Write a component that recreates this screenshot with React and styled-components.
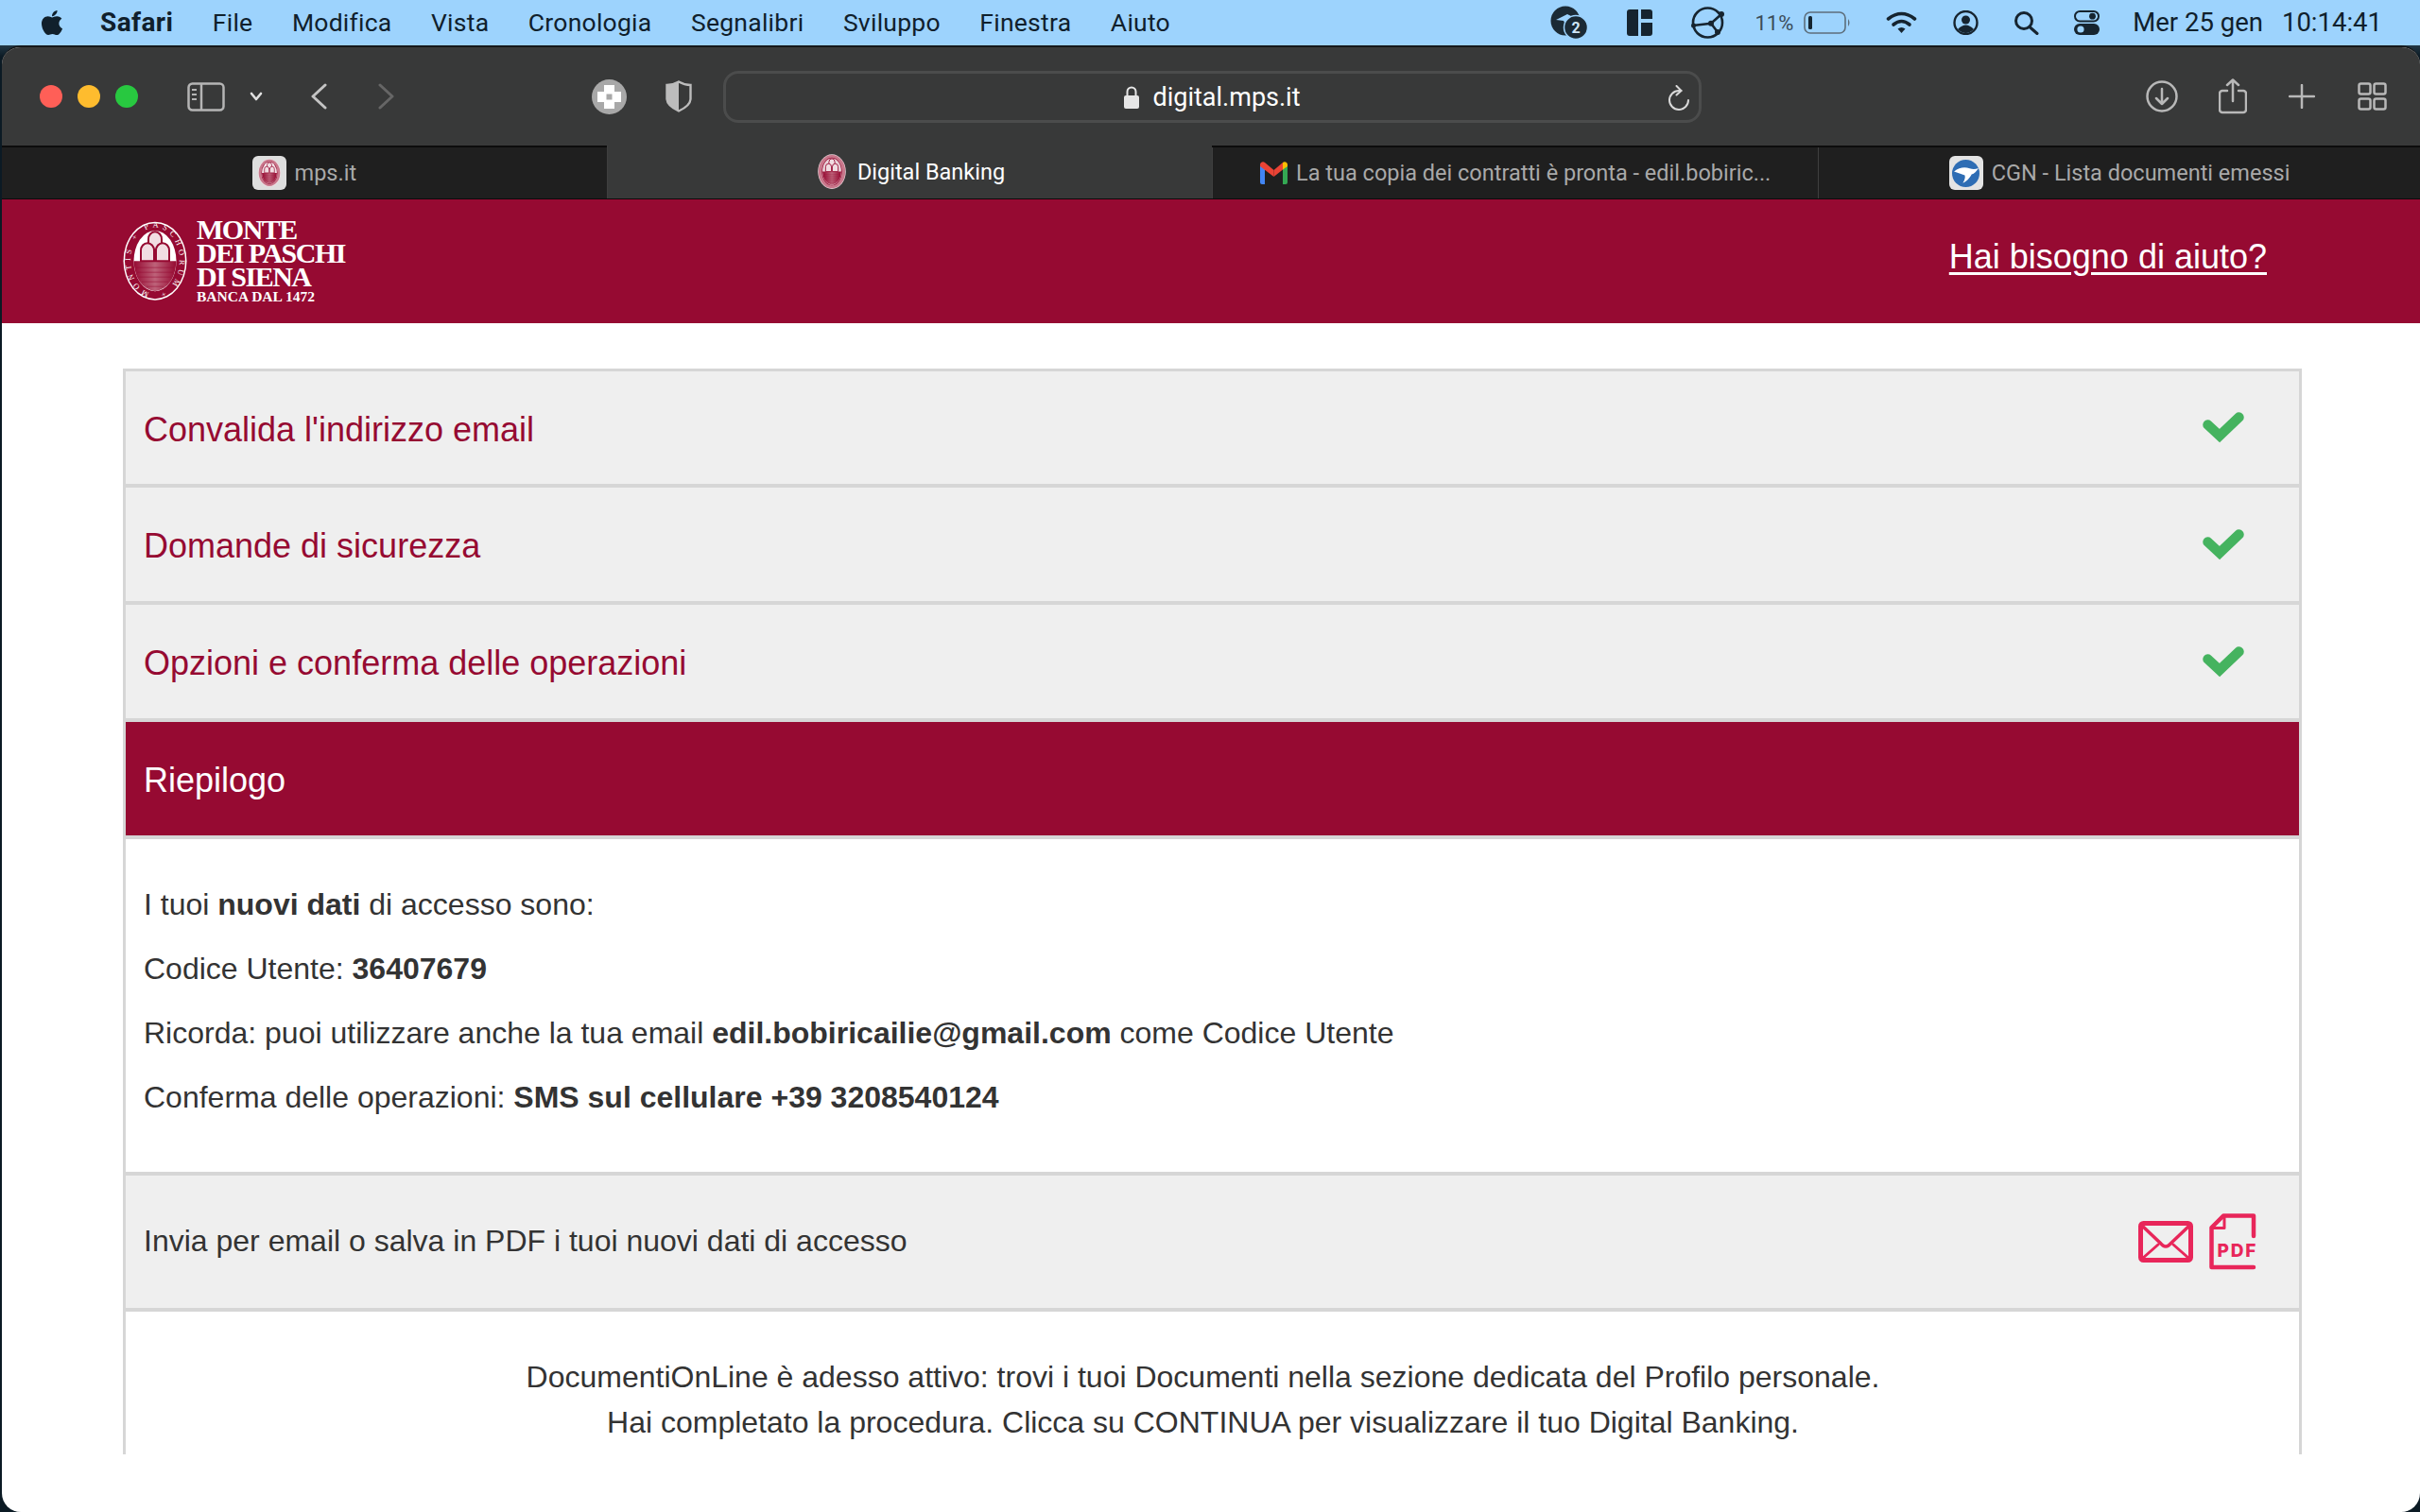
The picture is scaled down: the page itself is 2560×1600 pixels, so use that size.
import React from 'react';
import styled, { createGlobalStyle } from 'styled-components';
import { FaApple } from 'react-icons/fa';

const CRIMSON = '#960a32';
const LINE = '#d6d6d6';
const SAND = '#efefef';
const UI_FONT = 'Roboto, "Liberation Sans", sans-serif';

const GlobalStyle = createGlobalStyle`
  html, body {
    margin: 0;
    padding: 0;
    background: #0b1a24;
  }
  * { box-sizing: border-box; }
`;

const Screen = styled.div`
  width: 2560px;
  height: 1600px;
  overflow: hidden;
  display: flex;
  flex-direction: column;
  background: linear-gradient(180deg, #7fa9c4 0, #0b1a24 60px);
  font-family: "Liberation Sans", Arial, sans-serif;
`;

const MenuBar = styled.div`
  height: 48px;
  flex: none;
  display: flex;
  align-items: center;
  padding: 0 40px;
  background: #9dd3fd;
  color: #10202c;
  font-family: ${UI_FONT};
  font-size: 26.5px;
`;

const MenuItems = styled.div`
  display: flex;
  align-items: center;
  gap: 41.5px;
  margin-left: 36px;
  padding-bottom: 2px;
`;

const MenuItem = styled.span`
  font-weight: ${(p) => (p.$bold ? 700 : 400)};
  font-size: ${(p) => (p.$bold ? '28px' : 'inherit')};
  letter-spacing: ${(p) => (p.$bold ? '0.4px' : '0.25px')};
`;

const StatusArea = styled.div`
  margin-left: auto;
  display: flex;
  align-items: center;
  height: 48px;
`;

const StatusSlot = styled.div`
  display: flex;
  align-items: center;
  margin-left: ${(p) => p.$gap}px;
`;

const BatteryText = styled.span`
  font-size: 22px;
  color: #3a4b58;
`;

const Clock = styled.div`
  display: flex;
  gap: 20px;
  margin-left: 35px;
  padding-bottom: 2px;
  font-size: 27.5px;
`;

const Window = styled.div`
  flex: 1;
  margin-left: 2px;
  display: flex;
  flex-direction: column;
  background: #fff;
  border-radius: 20px;
  overflow: hidden;
  border-top: 2px solid #15181a;
`;

const Toolbar = styled.div`
  height: 104px;
  flex: none;
  display: flex;
  align-items: center;
  background: #383939;
  color: #d0d0d0;
  font-family: ${UI_FONT};
`;

const Light = styled.span`
  width: 24px;
  height: 24px;
  border-radius: 50%;
  margin-right: 16px;
  background: ${(p) => p.$color};
  &:first-child { margin-left: 40px; }
`;

const ToolIcon = styled.div`
  display: flex;
  align-items: center;
  flex: none;
  margin-left: ${(p) => p.$gap}px;
`;

const AddressBar = styled.div`
  position: relative;
  width: 1035px;
  height: 55px;
  margin-left: 33px;
  flex: none;
  display: flex;
  align-items: center;
  justify-content: center;
  gap: 14px;
  padding-top: 2px;
  border: 3px solid #4b4c4c;
  border-radius: 16px;
  color: #fff;
  font-size: 27px;
`;

const Reload = styled.div`
  position: absolute;
  right: 9px;
  top: 12px;
  display: flex;
`;

const TabStrip = styled.div`
  height: 57px;
  flex: none;
  display: flex;
  background: #1f1f1f;
  border-top: 2px solid #0c0c0c;
  border-bottom: 1px solid #0c0c0c;
  font-family: ${UI_FONT};
  font-size: 23.5px;
`;

const Tab = styled.div`
  flex: 1;
  display: flex;
  align-items: center;
  justify-content: center;
  gap: 9px;
  white-space: nowrap;
  color: ${(p) => (p.$active ? '#ffffff' : '#a9a9a9')};
  background: ${(p) => (p.$active ? '#383939' : '#1f1f1f')};
  margin-top: ${(p) => (p.$active ? '-2px' : '0')};
  border-left: 1px solid #3f3f3f;
  &:first-child { border-left: none; }
  &:last-child { flex: 0 0 637px; }
`;

const FavTile = styled.span`
  width: 36px;
  height: 36px;
  border-radius: 6px;
  background: ${(p) => p.$bg || 'transparent'};
  display: flex;
  align-items: center;
  justify-content: center;
`;

const BankHeader = styled.header`
  height: 131px;
  flex: none;
  display: flex;
  align-items: center;
  justify-content: space-between;
  padding: 0 162px 0 128px;
  background: ${CRIMSON};
`;

const Brand = styled.div`
  display: flex;
  align-items: center;
  gap: 10px;
`;

const BrandWords = styled.div`
  display: flex;
  flex-direction: column;
  margin-top: -2px;
  color: #fff;
  font-family: "Liberation Serif", "Times New Roman", serif;
  font-weight: 700;
`;

const BrandLine = styled.span`
  font-size: 30px;
  line-height: 25px;
  letter-spacing: -1.5px;
`;

const BrandTag = styled.span`
  font-size: 15.5px;
  line-height: 15px;
  margin-top: 1px;
`;

const HelpLink = styled.a`
  color: #fff;
  font-size: 36px;
  text-decoration: underline;
  text-underline-offset: 4px;
  margin-top: -9px;
`;

const Content = styled.main`
  height: 1197px;
  flex: none;
  overflow: hidden;
  padding: 48px 125px 0 128px;
  background: #fff;
`;

const Panel = styled.section`
  border: 3px solid ${LINE};
  border-bottom: none;
  height: 1200px;
`;

const StepRow = styled.div`
  height: 124px;
  display: flex;
  align-items: center;
  justify-content: space-between;
  padding: 4px 58px 0 19px;
  background: ${(p) => (p.$active ? CRIMSON : SAND)};
  color: ${(p) => (p.$active ? '#fff' : CRIMSON)};
  border-bottom: 4px solid ${LINE};
  font-size: 36px;
  &:first-child { height: 123px; }
`;

const CheckSlot = styled.span`
  display: flex;
  margin-top: -4px;
`;

const Summary = styled.div`
  height: 352px;
  padding: 51px 19px 0;
  color: #333;
  font-size: 32px;
`;

const SummaryLine = styled.p`
  margin: 0 0 32px;
  line-height: 36px;
  b { font-weight: 700; }
`;

const ActionRow = styled.div`
  height: 148px;
  display: flex;
  align-items: center;
  justify-content: space-between;
  padding: 0 41px 0 19px;
  background: ${SAND};
  border-top: 4px solid ${LINE};
  border-bottom: 4px solid ${LINE};
  color: #333;
  font-size: 32px;
`;

const ActionText = styled.span`
  margin-top: -2px;
`;

const ActionIcons = styled.div`
  display: flex;
  align-items: center;
  gap: 17px;
`;

const Closing = styled.div`
  padding: 45px 20px 0 0;
  color: #333;
  font-size: 32px;
  line-height: 48px;
  text-align: center;
`;

const Check = () => (
  <svg width="44" height="33" viewBox="0 0 44 33">
    <path d="M5.5 13.5 L18 25 L38.5 5.5" fill="none" stroke="#45b35f" strokeWidth="10.5" strokeLinecap="round" />
  </svg>
);

// the seal; the favicon sizes leave out the lettering, it would not be legible
const Emblem = ({ size = 68, ink = '#fff', deep = CRIMSON, lettered = false }) => (
  <svg width={size} height={size * 1.24} viewBox="0 0 68 84">
    <defs>
      <path id="emblem-ring" d="M34 76.5 a26 35 0 1 1 0 -70 a26 35 0 1 1 0 70" />
      <linearGradient id="emblem-water" x1="0" x2="1" y1="0" y2="0">
        <stop offset="0" stopColor={deep} />
        <stop offset=".5" stopColor="#bd6279" />
        <stop offset="1" stopColor={deep} />
      </linearGradient>
    </defs>
    <ellipse cx="34" cy="42" rx="33.5" ry="41.5" fill={ink} />
    <ellipse cx="34" cy="42" rx="32" ry="40" fill={lettered ? deep : '#c9788c'} />
    {lettered && (
      <text fontSize="8.4" fill={ink} fontFamily="Liberation Serif, serif">
        <textPath href="#emblem-ring" startOffset="6" textLength="180">MONTIS + PASCHORUM +</textPath>
      </text>
    )}
    <ellipse cx="34" cy="42" rx="24" ry="33.5" fill={deep} />
    <ellipse cx="34" cy="42" rx="22.5" ry="32" fill={ink} />
    <path d="M11.5 42 H56.5 Q55 70 34 74 Q13 70 11.5 42 Z" fill="url(#emblem-water)" />
    <path d="M14 49 H54 M15 54 H53 M17 59 H51 M20 64 H48 M25 69 H43" stroke={deep} strokeWidth="1" opacity=".5" />
    <g fill="#f1dde2" stroke={deep} strokeWidth="2">
      <path d="M27 30 V19 a7 8 0 0 1 14 0 V30 Z" />
      <path d="M19 42 V31 a7 8 0 0 1 14 0 V42 Z" />
      <path d="M35 42 V31 a7 8 0 0 1 14 0 V42 Z" />
    </g>
  </svg>
);

const GmailMark = () => (
  <svg width="29" height="24" viewBox="0 0 29 24">
    <path d="M0 3 L5 1 V24 H2 a2 2 0 0 1 -2 -2 Z" fill="#4285f4" />
    <path d="M29 3 L24 1 V24 H27 a2 2 0 0 0 2 -2 Z" fill="#34a853" />
    <path d="M0 3 a3 3 0 0 1 5 -2 L14.5 9 V16 L0 5 Z" fill="#ea4335" />
    <path d="M14.5 9 L24 1 V8.5 L14.5 16 Z" fill="#ea4335" />
    <path d="M24 1 a3 3 0 0 1 5 2 V5 L24 8.5 Z" fill="#fbbc04" />
  </svg>
);

const CgnMark = () => (
  <svg width="29" height="29" viewBox="0 0 28 28">
    <circle cx="14" cy="14" r="14" fill="#2e6db4" />
    <path d="M2 12 Q10 6 18 9 Q23 10.5 27 8.5 Q24 14 20 15 Q17 21 11 24 Q14 19 13 16 Q8 14 2 12 Z" fill="#fff" />
  </svg>
);

const MailGlyph = () => (
  <svg width="58" height="45" viewBox="0 0 58 45" fill="none" stroke="#e8265a" strokeLinecap="round" strokeLinejoin="round">
    <rect x="2.5" y="2.5" width="53" height="39" rx="3" strokeWidth="5" />
    <path d="M4 5 L26 26 Q29 28 32 26 L54 5" strokeWidth="3.5" />
    <path d="M4 40 L21 25 M54 40 L37 25" strokeWidth="3" />
  </svg>
);

const PdfGlyph = () => (
  <svg width="54" height="60" viewBox="0 0 54 60" fill="none" stroke="#e8265a" strokeLinecap="round" strokeLinejoin="round">
    <path d="M47 24 V2.5 H15 L2.5 15 V57 H47" strokeWidth="4.5" />
    <path d="M16 4 V15.5 H4" strokeWidth="3" />
    <text x="8.5" y="46" fontSize="19" fontWeight="800" letterSpacing="1.8" fill="#e8265a" stroke="none" fontFamily="Inter, sans-serif">PDF</text>
  </svg>
);

const SidebarGlyph = () => (
  <svg width="40" height="31" viewBox="0 0 40 31" fill="none" stroke="#b5b5b5" strokeWidth="2.5">
    <rect x="1.5" y="1.5" width="37" height="28" rx="4" />
    <path d="M15 2 V29" />
    <path d="M5 8 H10 M5 13 H10 M5 18 H10" strokeWidth="2" />
  </svg>
);

const Chevron = ({ dir, color = '#c4c4c4', w = 18, h = 28 }) => (
  <svg width={w} height={h} viewBox="0 0 18 28" fill="none" stroke={color} strokeWidth="3" strokeLinecap="round" strokeLinejoin="round">
    <path d={dir === 'left' ? 'M16 2 L3 14 L16 26' : 'M2 2 L15 14 L2 26'} />
  </svg>
);

const SmallCaret = () => (
  <svg width="14" height="10" viewBox="0 0 14 10" fill="none" stroke="#e0e0e0" strokeWidth="2.6" strokeLinecap="round" strokeLinejoin="round">
    <path d="M2 2 L7 8 L12 2" />
  </svg>
);

const ExtensionGlyph = () => (
  <svg width="37" height="37" viewBox="0 0 37 37">
    <circle cx="18.5" cy="18.5" r="18.5" fill="#a8a8a8" />
    <path d="M13 6 H24 V13 H31 V24 H24 V31 H13 V24 H6 V13 H13 Z" fill="#fff" />
    <rect x="15.5" y="15.5" width="6" height="6" fill="#a8a8a8" />
  </svg>
);

const ShieldGlyph = () => (
  <svg width="28" height="34" viewBox="0 0 28 34">
    <path d="M14 1.5 Q20 5 26.5 5 V20 Q26 27 14 32.5 Q2 27 1.5 20 V5 Q8 5 14 1.5 Z" fill="none" stroke="#bcbcbc" strokeWidth="2.4" />
    <path d="M14 1.5 Q8 5 1.5 5 V20 Q2 27 14 32.5 Z" fill="#bcbcbc" />
  </svg>
);

const LockGlyph = () => (
  <svg width="16" height="24" viewBox="0 0 16 24">
    <rect x="0" y="10" width="16" height="14" rx="2" fill="#e6e6e6" />
    <path d="M3.5 11 V6 a4.5 4.5 0 0 1 9 0 V11" fill="none" stroke="#e6e6e6" strokeWidth="2" />
  </svg>
);

const ReloadGlyph = () => (
  <svg width="24" height="27" viewBox="0 0 24 27" fill="none" stroke="#d8d8d8" strokeWidth="2" strokeLinecap="round" strokeLinejoin="round">
    <path d="M14.5 6 H12 A10 10 0 1 0 22 16" />
    <path d="M9.5 1 L14.5 6 L9.5 10.5" />
  </svg>
);

const DownloadGlyph = () => (
  <svg width="34" height="34" viewBox="0 0 34 34" fill="none" stroke="#b8b8b8" strokeWidth="2.5" strokeLinecap="round" strokeLinejoin="round">
    <circle cx="17" cy="17" r="15.5" />
    <path d="M17 9 V25 M11 19 L17 25 L23 19" />
  </svg>
);

const ShareGlyph = () => (
  <svg width="30" height="38" viewBox="0 0 30 38" fill="none" stroke="#b8b8b8" strokeWidth="2.5" strokeLinecap="round" strokeLinejoin="round">
    <path d="M9 13 H4 a3 3 0 0 0 -3 3 V33 a3 3 0 0 0 3 3 H26 a3 3 0 0 0 3 -3 V16 a3 3 0 0 0 -3 -3 H21" />
    <path d="M15 24 V2 M9 7 L15 1.5 L21 7" />
  </svg>
);

const PlusGlyph = () => (
  <svg width="28" height="26" viewBox="0 0 28 26" stroke="#b8b8b8" strokeWidth="2.5" strokeLinecap="round">
    <path d="M14 1 V25 M1 13 H27" />
  </svg>
);

const GridGlyph = () => (
  <svg width="31" height="30" viewBox="0 0 31 30" fill="none" stroke="#b8b8b8" strokeWidth="2.5">
    <rect x="1.5" y="1.5" width="12" height="11" rx="2" />
    <rect x="17.5" y="1.5" width="12" height="11" rx="2" />
    <rect x="1.5" y="17.5" width="12" height="11" rx="2" />
    <rect x="17.5" y="17.5" width="12" height="11" rx="2" />
  </svg>
);

const BackupGlyph = () => (
  <svg width="40" height="36" viewBox="0 0 40 36">
    <circle cx="16" cy="16" r="15.5" fill="#1b2a35" />
    <path d="M6 15 L18 9 L24 12 L15 18 L14 16 Z" fill="#9dd3fd" />
    <circle cx="27" cy="23" r="12.5" fill="#1b2a35" stroke="#9dd3fd" strokeWidth="1.5" />
    <text x="27" y="29" fontSize="16" fontWeight="700" textAnchor="middle" fill="#cfe6f7" fontFamily="Roboto, sans-serif">2</text>
  </svg>
);

const PanesGlyph = () => (
  <svg width="27" height="28" viewBox="0 0 27 28" fill="#16242f">
    <path d="M3 0 H12 V28 H3 a3 3 0 0 1 -3 -3 V3 a3 3 0 0 1 3 -3 Z" />
    <path d="M15 0 H24 a3 3 0 0 1 3 3 V10 H15 Z" />
    <path d="M15 14 H27 V25 a3 3 0 0 1 -3 3 H15 Z" />
  </svg>
);

const MeshGlyph = () => (
  <svg width="36" height="34" viewBox="0 0 36 34" fill="none" stroke="#16242f" strokeWidth="2.6">
    <circle cx="17.5" cy="17" r="15.5" />
    <path d="M2 20 L21 17.7 L32 8 M21 17.7 L28 27" />
    <g fill="#16242f" stroke="none">
      <circle cx="21" cy="17.7" r="3" />
      <circle cx="32" cy="8" r="3" />
      <circle cx="28" cy="27" r="3" />
      <circle cx="2.5" cy="20" r="2.5" />
    </g>
  </svg>
);

const BatteryGlyph = () => (
  <svg width="50" height="24" viewBox="0 0 50 24">
    <rect x="1" y="1" width="43" height="22" rx="6" fill="none" stroke="#5d6e7b" strokeWidth="1.6" />
    <rect x="5" y="5" width="4" height="14" rx="1.5" fill="#16242f" />
    <path d="M47 8 Q50 12 47 16 Z" fill="#5d6e7b" />
  </svg>
);

const WifiGlyph = () => (
  <svg width="33" height="24" viewBox="0 0 33 24" fill="none" stroke="#16242f" strokeWidth="3.6" strokeLinecap="round">
    <path d="M2.5 8 Q16.5 -3 30.5 8" />
    <path d="M8 14 Q16.5 7 25 14" />
    <path d="M16.5 23 L12.5 18.5 Q16.5 15.5 20.5 18.5 Z" fill="#16242f" stroke="none" />
  </svg>
);

const UserGlyph = () => (
  <svg width="27" height="26" viewBox="0 0 27 26">
    <circle cx="13.5" cy="13" r="12" fill="none" stroke="#16242f" strokeWidth="2.4" />
    <circle cx="13.5" cy="10" r="4.5" fill="#16242f" />
    <path d="M5 20 Q13.5 11 22 20 Q13.5 28 5 20 Z" fill="#16242f" />
  </svg>
);

const SearchGlyph = () => (
  <svg width="27" height="25" viewBox="0 0 27 25" fill="none" stroke="#16242f" strokeWidth="3" strokeLinecap="round">
    <circle cx="11" cy="10" r="8.5" />
    <path d="M17 16.5 L25 23.5" />
  </svg>
);

const TogglesGlyph = () => (
  <svg width="27" height="26" viewBox="0 0 27 26">
    <rect x="1" y="1" width="25" height="10.5" rx="5.2" fill="none" stroke="#16242f" strokeWidth="2" />
    <circle cx="19.5" cy="6.2" r="3.4" fill="#16242f" />
    <rect y="14" width="27" height="12" rx="6" fill="#16242f" />
    <circle cx="7" cy="20" r="3.6" fill="#9dd3fd" />
  </svg>
);

const menus = ['File', 'Modifica', 'Vista', 'Cronologia', 'Segnalibri', 'Sviluppo', 'Finestra', 'Aiuto'];

const steps = ["Convalida l'indirizzo email", 'Domande di sicurezza', 'Opzioni e conferma delle operazioni'];

const App = () => (
  <>
    <GlobalStyle />
    <Screen>
      <MenuBar>
        <FaApple size={30} />
        <MenuItems>
          <MenuItem $bold>Safari</MenuItem>
          {menus.map((m) => (
            <MenuItem key={m}>{m}</MenuItem>
          ))}
        </MenuItems>
        <StatusArea>
          <StatusSlot $gap={0}><BackupGlyph /></StatusSlot>
          <StatusSlot $gap={41}><PanesGlyph /></StatusSlot>
          <StatusSlot $gap={41}><MeshGlyph /></StatusSlot>
          <StatusSlot $gap={31}><BatteryText>11%</BatteryText></StatusSlot>
          <StatusSlot $gap={11}><BatteryGlyph /></StatusSlot>
          <StatusSlot $gap={37}><WifiGlyph /></StatusSlot>
          <StatusSlot $gap={38}><UserGlyph /></StatusSlot>
          <StatusSlot $gap={37}><SearchGlyph /></StatusSlot>
          <StatusSlot $gap={37}><TogglesGlyph /></StatusSlot>
          <Clock>
            <span>Mer 25 gen</span>
            <span>10:14:41</span>
          </Clock>
        </StatusArea>
      </MenuBar>
      <Window>
        <Toolbar>
          <Light $color="#ff5f57" />
          <Light $color="#febc2e" />
          <Light $color="#28c840" />
          <ToolIcon $gap={36}><SidebarGlyph /></ToolIcon>
          <ToolIcon $gap={26}><SmallCaret /></ToolIcon>
          <ToolIcon $gap={50}><Chevron dir="left" /></ToolIcon>
          <ToolIcon $gap={54}><Chevron dir="right" color="#666666" /></ToolIcon>
          <ToolIcon $gap={208}><ExtensionGlyph /></ToolIcon>
          <ToolIcon $gap={41}><ShieldGlyph /></ToolIcon>
          <AddressBar>
            <LockGlyph />
            digital.mps.it
            <Reload><ReloadGlyph /></Reload>
          </AddressBar>
          <ToolIcon $gap={470}><DownloadGlyph /></ToolIcon>
          <ToolIcon $gap={43}><ShareGlyph /></ToolIcon>
          <ToolIcon $gap={44}><PlusGlyph /></ToolIcon>
          <ToolIcon $gap={45}><GridGlyph /></ToolIcon>
        </Toolbar>
        <TabStrip>
          <Tab>
            <FavTile $bg="#dedede"><Emblem size={24} ink="#f3e3e7" /></FavTile>
            mps.it
          </Tab>
          <Tab $active>
            <FavTile><Emblem size={30} ink="#e9d3d9" /></FavTile>
            Digital Banking
          </Tab>
          <Tab>
            <GmailMark />
            La tua copia dei contratti è pronta - edil.bobiric...
          </Tab>
          <Tab>
            <FavTile $bg="#e4e4e4"><CgnMark /></FavTile>
            CGN - Lista documenti emessi
          </Tab>
        </TabStrip>
        <BankHeader>
          <Brand>
            <Emblem lettered />
            <BrandWords>
              <BrandLine>MONTE</BrandLine>
              <BrandLine>DEI PASCHI</BrandLine>
              <BrandLine>DI SIENA</BrandLine>
              <BrandTag>BANCA DAL 1472</BrandTag>
            </BrandWords>
          </Brand>
          <HelpLink href="#">Hai bisogno di aiuto?</HelpLink>
        </BankHeader>
        <Content>
          <Panel>
            {steps.map((s) => (
              <StepRow key={s}>
                {s}
                <CheckSlot><Check /></CheckSlot>
              </StepRow>
            ))}
            <StepRow $active>Riepilogo</StepRow>
            <Summary>
              <SummaryLine>I tuoi <b>nuovi dati</b> di accesso sono:</SummaryLine>
              <SummaryLine>Codice Utente: <b>36407679</b></SummaryLine>
              <SummaryLine>Ricorda: puoi utilizzare anche la tua email <b>edil.bobiricailie@gmail.com</b> come Codice Utente</SummaryLine>
              <SummaryLine>Conferma delle operazioni: <b>SMS sul cellulare +39 3208540124</b></SummaryLine>
            </Summary>
            <ActionRow>
              <ActionText>Invia per email o salva in PDF i tuoi nuovi dati di accesso</ActionText>
              <ActionIcons>
                <MailGlyph />
                <PdfGlyph />
              </ActionIcons>
            </ActionRow>
            <Closing>
              DocumentiOnLine è adesso attivo: trovi i tuoi Documenti nella sezione dedicata del Profilo personale.
              <br />
              Hai completato la procedura. Clicca su CONTINUA per visualizzare il tuo Digital Banking.
            </Closing>
          </Panel>
        </Content>
      </Window>
    </Screen>
  </>
);

export default App;
